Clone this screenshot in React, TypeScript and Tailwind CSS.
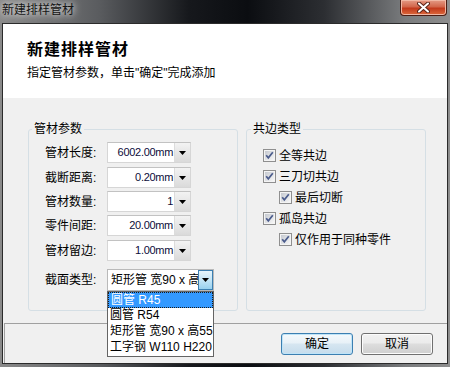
import type { ReactNode } from 'react';

const cjk = "font-['Liberation_Sans','Noto_Sans_CJK_SC',sans-serif]";

const Arrow = () => (
  <svg width="7" height="4" viewBox="0 0 7 4">
    <path d="M0 0h7L3.5 4z" fill="#000" />
  </svg>
);

const CheckBox = () => (
  <svg width="13" height="13" viewBox="0 0 13 13" className="shrink-0">
    <defs>
      <linearGradient id="cbfill" x1="0" y1="0" x2="1" y2="1">
        <stop offset="0" stopColor="#c5c9d0" />
        <stop offset="1" stopColor="#f7f7f7" />
      </linearGradient>
    </defs>
    <rect x="0.5" y="0.5" width="12" height="12" fill="#f4f4f4" stroke="#8f8f8f" />
    <rect x="2" y="2" width="9" height="9" fill="url(#cbfill)" />
    <path d="M3.2 6.2 L5.3 8.8 L9.8 3.2" fill="none" stroke="#4b5c8c" strokeWidth="1.7" />
  </svg>
);

const SpinField = ({ label, value, className = '' }: { label: string; value: string; className?: string }) => (
  <div className={`flex h-[21px] items-center ${className}`}>
    <span className="w-[62px] text-[12px] leading-[14px] text-black">{label}</span>
    <div className="flex h-[21px] w-[84px] border border-[#d6d6d6] border-t-[#c2c2c2] bg-white">
      <span className="flex flex-1 items-center justify-end pr-[1px] text-[11px] tracking-[-0.3px] text-[#0c0c3a]">
        {value}
      </span>
      <span className="flex w-[16px] items-center justify-center border-l border-[#dcdcdc] bg-[linear-gradient(#f3f3f3,#dadada)]">
        <Arrow />
      </span>
    </div>
  </div>
);

const Option = ({ children, active = false }: { children: ReactNode; active?: boolean }) => (
  <div
    className={`h-[16px] whitespace-nowrap pl-[2px] text-[12px] leading-[15px] ${
      active ? 'border border-dotted border-[#1a1a1a] bg-[#3399ff] pl-[1px] text-white' : 'text-black'
    }`}
  >
    {children}
  </div>
);

const CheckRow = ({ label, indent = false }: { label: string; indent?: boolean }) => (
  <div className={`flex h-[21px] items-center gap-[3px] ${indent ? 'pl-[16px]' : ''}`}>
    <CheckBox />
    <span className="text-[12px] leading-[14px] text-black">{label}</span>
  </div>
);

const Button = ({ children, primary = false }: { children: ReactNode; primary?: boolean }) => (
  <button
    className={`flex h-[22px] w-[72px] items-center justify-center rounded-[3px] border text-[12px] leading-[14px] text-black ${
      primary
        ? 'border-[#3c7fb1] bg-[linear-gradient(#f4f9fc_0%,#e8f1f7_45%,#d6e6f1_50%,#c6dcec_100%)] shadow-[inset_0_0_0_1px_#bfe4f8]'
        : 'border-[#707070] bg-[linear-gradient(#f2f2f2_0%,#ebebeb_45%,#dddddd_50%,#cfcfcf_100%)] shadow-[inset_0_0_0_1px_#fcfcfc]'
    }`}
  >
    {children}
  </button>
);

export default function App() {
  return (
    <div
      className={`flex h-[367px] w-[450px] flex-col overflow-hidden bg-[linear-gradient(to_right,#8a8a8a_0%,#5a5c5f_22%,#16181c_42%,#0b0d11_55%,#2c2e32_72%,#7a7c7e_90%,#8e8e8e_100%)] ${cjk}`}
    >
      {/* title bar */}
      <div className="flex h-[23px] items-start justify-between">
        <span className="pl-[2px] pt-[3px] text-[12px] leading-[14px] text-[#141414] [text-shadow:0_0_6px_#e8e8e8,0_0_10px_#cfcfcf]">
          新建排样管材
        </span>
        <div className="mr-[3px] flex h-[16px] w-[47px] items-center justify-center rounded-b-[4px] border border-t-0 border-[#4a1d14] bg-[linear-gradient(#e49b86_0%,#d2664b_45%,#c2391c_55%,#dc6a3c_100%)] shadow-[inset_0_0_0_1px_#f0b7a4]">
          <svg width="13" height="11" viewBox="0 0 13 11">
            <path d="M2 1.5 L11 9.5 M11 1.5 L2 9.5" stroke="#5a2418" strokeWidth="4" strokeLinecap="round" />
            <path d="M2 1.5 L11 9.5 M11 1.5 L2 9.5" stroke="#fff" strokeWidth="2" strokeLinecap="round" />
          </svg>
        </div>
      </div>

      {/* client area */}
      <div className="ml-[2px] flex h-[341px] w-[446px] flex-col border border-[#2b2b2b] bg-[#f0f0f0]">
        <div className="h-[74px] bg-white pl-[24px] pt-[17px]">
          <div className="text-[16px] font-bold leading-[18px] tracking-[1px] text-black">新建排样管材</div>
          <div className="mt-[7px] text-[12px] leading-[14px] text-black">指定管材参数，单击"确定"完成添加</div>
        </div>

        <div className="flex gap-[8px] pl-[25px] pt-[24px]">
          <fieldset className="relative z-10 h-[189px] w-[210px] rounded-[3px] border border-[#d5dfe5] pl-[16px] pt-[6px]">
            <legend className="ml-[-13px] px-[2px] text-[12px] leading-[14px] text-black">管材参数</legend>
            <SpinField label="管材长度:" value="6002.00mm" />
            <SpinField label="截断距离:" value="0.20mm" className="mt-[4px]" />
            <SpinField label="管材数量:" value="1" className="mt-[3px]" />
            <SpinField label="零件间距:" value="20.00mm" className="mt-[3px]" />
            <SpinField label="管材留边:" value="1.00mm" className="mt-[4px]" />
            <div className="mt-[8px] flex h-[22px] items-center">
              <span className="w-[62px] text-[12px] leading-[14px] text-black">截面类型:</span>
              <div className="relative flex h-[22px] w-[107px] border border-[#b9b9b9] bg-white">
                <span className="flex-1 overflow-hidden whitespace-nowrap pl-[3px] text-[12px] leading-[20px] text-black">
                  矩形管 宽90 x 高55 R
                </span>
                <span className="flex w-[15px] items-center justify-center border border-[#3c7fb1] bg-[linear-gradient(#e5f4fc_0%,#c4e5f6_50%,#98d1ef_100%)]">
                  <Arrow />
                </span>
                <div className="absolute left-[-1px] top-[21px] h-[66px] w-[107px] overflow-hidden border border-[#646464] bg-white">
                  <Option active>圆管 R45</Option>
                  <Option>圆管 R54</Option>
                  <Option>矩形管 宽90 x 高55 R</Option>
                  <Option>工字钢 W110 H220</Option>
                </div>
              </div>
            </div>
          </fieldset>

          <fieldset className="h-[189px] w-[180px] rounded-[3px] border border-[#d5dfe5] pl-[16px] pt-[9px]">
            <legend className="ml-[-12px] px-[2px] text-[12px] leading-[14px] text-black">共边类型</legend>
            <CheckRow label="全等共边" />
            <CheckRow label="三刀切共边" />
            <CheckRow label="最后切断" indent />
            <CheckRow label="孤岛共边" />
            <CheckRow label="仅作用于同种零件" indent />
          </fieldset>
        </div>

        <div className="ml-[1px] mt-auto flex h-[40px] justify-end gap-[8px] border-l border-t border-[#a0a0a0] pr-[14px] pt-[9px]">
          <Button primary>确定</Button>
          <Button>取消</Button>
        </div>
      </div>
    </div>
  );
}
